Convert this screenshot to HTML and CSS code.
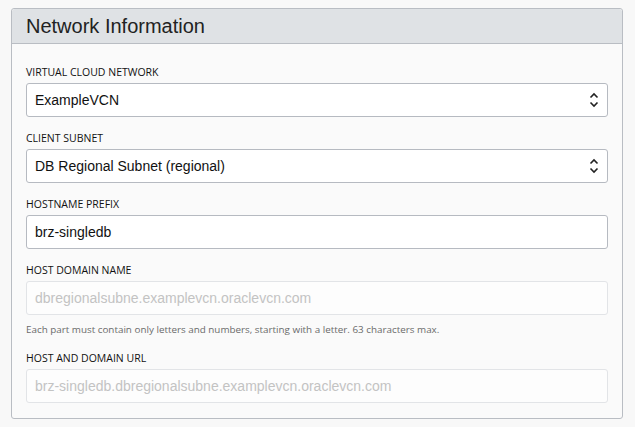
FILE: index.html
```html
<!DOCTYPE html>
<html>
<head>
<meta charset="utf-8">
<link rel="stylesheet" href="styles.css">
</head>
<body>
<section class="panel">
  <header class="panel-head">Network Information</header>
  <div class="panel-body">
    <div class="field">
      <div class="label">VIRTUAL CLOUD NETWORK</div>
      <div class="input select">
        <span>ExampleVCN</span>
        <svg class="chev" width="10" height="16" viewBox="0 0 10 16"><path d="M1.5 5.5 L5 2 L8.5 5.5 M1.5 10.5 L5 14 L8.5 10.5" fill="none" stroke="#222" stroke-width="1.6"/></svg>
      </div>
    </div>
    <div class="field">
      <div class="label">CLIENT SUBNET</div>
      <div class="input select">
        <span>DB Regional Subnet (regional)</span>
        <svg class="chev" width="10" height="16" viewBox="0 0 10 16"><path d="M1.5 5.5 L5 2 L8.5 5.5 M1.5 10.5 L5 14 L8.5 10.5" fill="none" stroke="#222" stroke-width="1.6"/></svg>
      </div>
    </div>
    <div class="field">
      <div class="label">HOSTNAME PREFIX</div>
      <div class="input"><span>brz-singledb</span></div>
    </div>
    <div class="field">
      <div class="label">HOST DOMAIN NAME</div>
      <div class="input disabled"><span>dbregionalsubne.examplevcn.oraclevcn.com</span></div>
      <div class="help">Each part must contain only letters and numbers, starting with a letter. 63 characters max.</div>
    </div>
    <div class="field last">
      <div class="label">HOST AND DOMAIN URL</div>
      <div class="input disabled"><span>brz-singledb.dbregionalsubne.examplevcn.oraclevcn.com</span></div>
    </div>
  </div>
</section>
</body>
</html>
```
FILE: styles.css
```css
html, body {
  margin: 0;
  padding: 0;
  background: #f8f8f8;
}
body {
  padding: 8px 0 0 11px;
  font-family: "Liberation Sans", Arial, sans-serif;
}
.panel {
  width: 610px;
  border: 1px solid #b9bdc3;
  border-radius: 3px;
  background: #fafafa;
}
.panel-head {
  height: 35px;
  box-sizing: border-box;
  border-bottom: 1px solid #b9bdc3;
  background: #dfe2e5;
  color: #222;
  font-size: 20px;
  line-height: 34px;
  padding-left: 14px;
  border-radius: 3px 3px 0 0;
}
.panel-body {
  padding: 20px 14px 15px 14px;
}
.field {
  margin-bottom: 13px;
}
.field.last {
  margin-bottom: 0;
}
.label {
  font-family: "Open Sans", "Noto Sans", sans-serif;
  font-size: 10.5px;
  line-height: 16px;
  height: 16px;
  color: #111;
  margin-bottom: 3px;
}
.input {
  box-sizing: border-box;
  height: 34px;
  border: 1px solid #b6bac1;
  border-radius: 3px;
  background: #fff;
  display: flex;
  align-items: center;
  padding: 0 8px 0 8px;
  font-size: 14px;
  color: #111;
}
.input span {
  flex: 1;
}
.input.disabled {
  border-color: #e2e4e7;
  background: #fdfdfd;
  color: #c3c3c3;
}
.chev {
  display: block;
}
.help {
  font-family: "Open Sans", "Noto Sans", sans-serif;
  font-size: 9.85px;
  line-height: 16px;
  color: #6a6a6a;
  margin-top: 6px;
  margin-bottom: 4px;
}
```
